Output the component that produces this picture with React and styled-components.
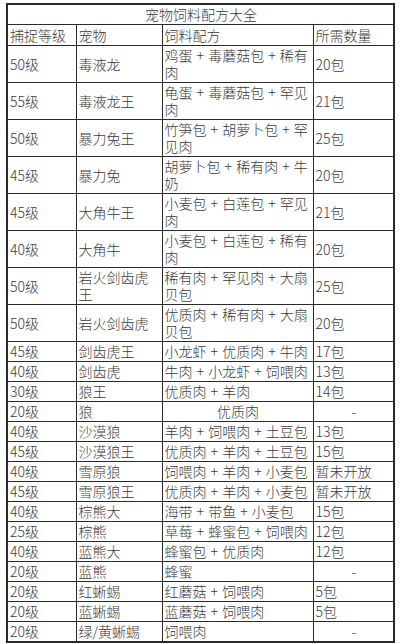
import React from 'react';
import styled, { createGlobalStyle } from 'styled-components';

const GlobalStyle = createGlobalStyle`
  html, body {
    margin: 0;
    padding: 0;
    background: #ffffff;
  }
  body {
    font-family: "Noto Sans CJK SC", "Noto Sans", sans-serif;
    color: #3a3a3a;
  }
`;

const App = () => {
  return (
    <Page>
      <GlobalStyle />
      <Table>
        <colgroup>
          <col style={{ width: 69 }} />
          <col style={{ width: 86 }} />
          <col style={{ width: 151 }} />
          <col style={{ width: 81 }} />
        </colgroup>
        <thead>
          <tr>
            <TitleCell colSpan={4}>宠物饲料配方大全</TitleCell>
          </tr>
          <tr>
            {HEADERS.map(title => (
              <HeadCell key={title}>{title}</HeadCell>
            ))}
          </tr>
        </thead>
        <tbody>
          {RECIPES.map(row => (
            <tr key={row.id}>
              <Cell>{row.level}</Cell>
              <Cell>
                <Lines lines={row.pet} />
              </Cell>
              <Cell $center={row.centerRecipe}>
                <Lines lines={row.recipe} />
              </Cell>
              <Cell $center={row.amount === '-'}>{row.amount}</Cell>
            </tr>
          ))}
        </tbody>
      </Table>
    </Page>
  );
};

const Lines = ({ lines }) => {
  const list = Array.isArray(lines) ? lines : [lines];
  return list.map((line, i) => <Line key={i}>{line}</Line>);
};

const Page = styled.div`
  padding: 3px 0 0 6px;
`;

const Table = styled.table`
  width: 389px;
  table-layout: fixed;
  border-collapse: collapse;
  border: 2px solid #2a2a2a;
  font-size: 14px;
  line-height: 17px;
  font-weight: 300;
  word-spacing: 1px;
`;

const Cell = styled.td`
  border: 1px solid #2a2a2a;
  padding: 1px 1px 1px 2px;
  text-align: ${props => (props.$center ? 'center' : 'left')};
  vertical-align: middle;
  white-space: nowrap;
  overflow: hidden;
  font-weight: 300;
`;

const HeadCell = styled(Cell).attrs({ as: 'th' })`
  padding-top: 2px;
  padding-bottom: 1px;
`;

const TitleCell = styled(Cell).attrs({ as: 'th' })`
  text-align: center;
`;

const Line = styled.span`
  display: block;
`;

const HEADERS = ['捕捉等级', '宠物', '饲料配方', '所需数量'];

const RECIPES = [
  { id: 1, level: '50级', pet: '毒液龙', recipe: ['鸡蛋 + 毒蘑菇包 + 稀有', '肉'], amount: '20包' },
  { id: 2, level: '55级', pet: '毒液龙王', recipe: ['龟蛋 + 毒蘑菇包 + 罕见', '肉'], amount: '21包' },
  { id: 3, level: '50级', pet: '暴力兔王', recipe: ['竹笋包 + 胡萝卜包 + 罕', '见肉'], amount: '25包' },
  { id: 4, level: '45级', pet: '暴力兔', recipe: ['胡萝卜包 + 稀有肉 + 牛', '奶'], amount: '20包' },
  { id: 5, level: '45级', pet: '大角牛王', recipe: ['小麦包 + 白莲包 + 罕见', '肉'], amount: '21包' },
  { id: 6, level: '40级', pet: '大角牛', recipe: ['小麦包 + 白莲包 + 稀有', '肉'], amount: '20包' },
  { id: 7, level: '50级', pet: ['岩火剑齿虎', '王'], recipe: ['稀有肉 + 罕见肉 + 大扇', '贝包'], amount: '25包' },
  { id: 8, level: '50级', pet: '岩火剑齿虎', recipe: ['优质肉 + 稀有肉 + 大扇', '贝包'], amount: '20包' },
  { id: 9, level: '45级', pet: '剑齿虎王', recipe: '小龙虾 + 优质肉 + 牛肉', amount: '17包' },
  { id: 10, level: '40级', pet: '剑齿虎', recipe: '牛肉 + 小龙虾 + 饲喂肉', amount: '13包' },
  { id: 11, level: '30级', pet: '狼王', recipe: '优质肉 + 羊肉', amount: '14包' },
  { id: 12, level: '20级', pet: '狼', recipe: '优质肉', centerRecipe: true, amount: '-' },
  { id: 13, level: '40级', pet: '沙漠狼', recipe: '羊肉 + 饲喂肉 + 土豆包', amount: '13包' },
  { id: 14, level: '45级', pet: '沙漠狼王', recipe: '优质肉 + 羊肉 + 土豆包', amount: '15包' },
  { id: 15, level: '40级', pet: '雪原狼', recipe: '饲喂肉 + 羊肉 + 小麦包', amount: '暂未开放' },
  { id: 16, level: '45级', pet: '雪原狼王', recipe: '优质肉 + 羊肉 + 小麦包', amount: '暂未开放' },
  { id: 17, level: '40级', pet: '棕熊大', recipe: '海带 + 带鱼 + 小麦包', amount: '15包' },
  { id: 18, level: '25级', pet: '棕熊', recipe: '草莓 + 蜂蜜包 + 饲喂肉', amount: '12包' },
  { id: 19, level: '40级', pet: '蓝熊大', recipe: '蜂蜜包 + 优质肉', amount: '12包' },
  { id: 20, level: '20级', pet: '蓝熊', recipe: '蜂蜜', amount: '-' },
  { id: 21, level: '20级', pet: '红蜥蜴', recipe: '红蘑菇 + 饲喂肉', amount: '5包' },
  { id: 22, level: '20级', pet: '蓝蜥蜴', recipe: '蓝蘑菇 + 饲喂肉', amount: '5包' },
  { id: 23, level: '20级', pet: '绿/黄蜥蜴', recipe: '饲喂肉', amount: '-' },
];

export default App;
